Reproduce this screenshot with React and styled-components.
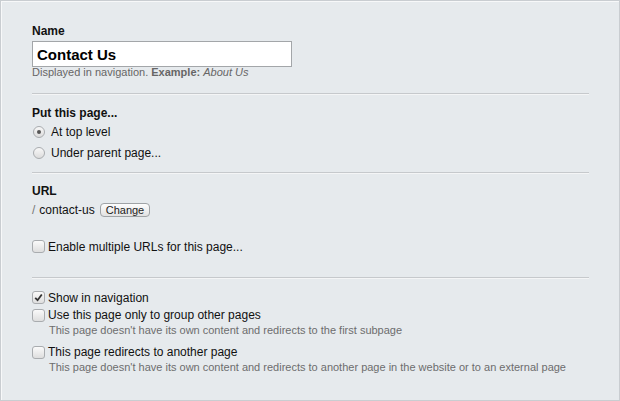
import React from 'react'
import styled, { createGlobalStyle } from 'styled-components'

const GlobalStyle = createGlobalStyle`
  html, body {
    margin: 0;
    padding: 0;
    background: #e6eaed;
  }
  body {
    font-family: "Liberation Sans", Arial, sans-serif;
  }
`;

const Panel = styled.div`
  box-sizing: border-box;
  width: 620px;
  height: 401px;
  background: #e6eaed;
  border: 1px solid #c9cdd1;
  box-shadow: inset 1px 1px 0 #f7f8f9;
  padding: 23px 30px 0 31px;
  color: #111;
`;

const Section = styled.div`
  padding: ${p => p.pad || '0'};
`;

const Divider = styled.div`
  height: 1px;
  background: #c6c9cc;
  border-bottom: 1px solid #f4f5f6;
  margin: ${p => p.m || '0'};
`;

const Label = styled.div`
  font-size: 12px;
  font-weight: bold;
  line-height: 14px;
  margin-bottom: ${p => p.mb || '3px'};
`;

const TextInput = styled.input`
  box-sizing: border-box;
  display: block;
  width: 260px;
  height: 26px;
  border: 1px solid #a3a6a9;
  background: #fff;
  padding: 0 4px;
  font-family: "Liberation Sans", Arial, sans-serif;
  font-size: 15px;
  font-weight: bold;
  color: #000;
  outline: none;
`;

const Hint = styled.div`
  font-size: 11px;
  line-height: 14px;
  color: #666;
  margin-top: -2px;

  b { font-weight: bold; }
  i { font-style: italic; }
`;

const OptionRow = styled.label`
  display: flex;
  align-items: center;
  height: ${p => p.h || '21px'};
  font-size: 12px;
  color: #111;
  gap: ${p => p.gap || '6px'};
`;

const Radio = styled.span`
  box-sizing: border-box;
  width: 12px;
  height: 12px;
  border-radius: 50%;
  border: 1px solid #a9acaf;
  background: linear-gradient(#f8f8f8, #dcdcdc);
  display: flex;
  align-items: center;
  justify-content: center;
  margin-left: 1px;

  &::after {
    content: '';
    width: 4px;
    height: 4px;
    border-radius: 50%;
    background: ${p => (p.checked ? '#555' : 'transparent')};
  }
`;

const Check = styled.span`
  box-sizing: border-box;
  width: 13px;
  height: 13px;
  border-radius: 3px;
  border: 1px solid #a9acaf;
  background: linear-gradient(#fafafa, #dedede);
  display: flex;
  align-items: center;
  justify-content: center;
`;

const SubText = styled.div`
  font-size: 11px;
  line-height: 14px;
  color: #6d6d6d;
  padding-left: 17px;
  white-space: nowrap;
`;

const UrlRow = styled.div`
  display: flex;
  align-items: center;
  font-size: 12px;
  height: 18px;
  gap: 4px;

  span.slash { color: #777; }
`;

const SmallButton = styled.button`
  font-family: "Liberation Sans", Arial, sans-serif;
  font-size: 11px;
  line-height: 11px;
  height: 14px;
  padding: 0 5px;
  border: 1px solid #9fa3a6;
  border-radius: 4px;
  background: linear-gradient(#fdfdfd, #e2e2e2);
  color: #222;
  margin-left: 1px;
`;

const Tick = () => (
  <svg width="9" height="9" viewBox="0 0 9 9">
    <path d="M1.2 4.8 L3.6 7.2 L7.8 1.5" fill="none" stroke="#333" strokeWidth="1.8" />
  </svg>
);

const Option = ({ type, checked, children, h }) => (
  <OptionRow h={h} gap={type === 'radio' ? '6px' : '3px'}>
    {type === 'radio' ? (
      <Radio checked={checked} />
    ) : (
      <Check>{checked && <Tick />}</Check>
    )}
    {children}
  </OptionRow>
);

export default function App() {
  return (
    <>
      <GlobalStyle />
      <Panel>
        <Section>
          <Label>Name</Label>
          <TextInput defaultValue="Contact Us" />
          <Hint>
            Displayed in navigation. <b>Example:</b> <i>About Us</i>
          </Hint>
        </Section>

        <Divider m="14px 0 11px" />

        <Section>
          <Label mb="1px">Put this page...</Label>
          <Option type="radio" checked>At top level</Option>
          <Option type="radio">Under parent page...</Option>
        </Section>

        <Divider m="9px 0 10px" />

        <Section>
          <Label>URL</Label>
          <UrlRow>
            <span className="slash">/</span> contact-us
            <SmallButton>Change</SmallButton>
          </UrlRow>
          <Section pad="17px 0 0">
            <Option type="check">Enable multiple URLs for this page...</Option>
          </Section>
        </Section>

        <Divider m="20px 0 9px" />

        <Section>
          <Option type="check" checked h="19px">Show in navigation</Option>
          <Option type="check" h="16px">Use this page only to group other pages</Option>
          <SubText>This page doesn't have its own content and redirects to the first subpage</SubText>
          <Section pad="7px 0 0">
            <Option type="check" h="16px">This page redirects to another page</Option>
            <SubText>This page doesn't have its own content and redirects to another page in the website or to an external page</SubText>
          </Section>
        </Section>
      </Panel>
    </>
  );
}
